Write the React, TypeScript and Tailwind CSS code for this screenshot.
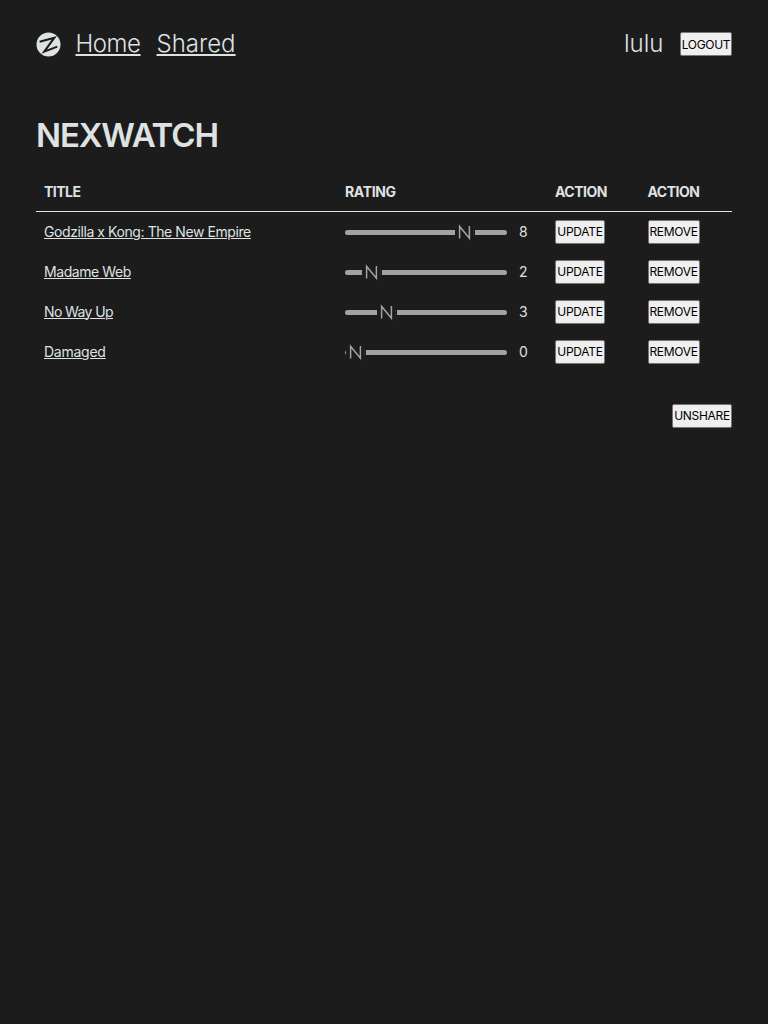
type Movie = { title: string; rating: number; offset: string; tracking: string };

const movies: Movie[] = [
  { title: 'Godzilla x Kong: The New Empire', rating: 8, offset: 'left-[110px]', tracking: 'tracking-[-0.42px]' },
  { title: 'Madame Web', rating: 2, offset: 'left-[17px]', tracking: 'tracking-[-0.42px]' },
  { title: 'No Way Up', rating: 3, offset: 'left-[32px]', tracking: 'tracking-[-0.6px]' },
  { title: 'Damaged', rating: 0, offset: 'left-px', tracking: 'tracking-[-0.25px]' },
];

const columns = 'grid grid-cols-[301px_174px_36px_92.5px_83.5px] items-center pl-2';

function Button({ label, className }: { label: string; className: string }) {
  return (
    <button
      className={`flex h-6 items-center justify-center rounded-[2px] border border-[#767676] bg-[#efefef] text-[12px] leading-none tracking-[-0.3px] whitespace-nowrap text-black ${className}`}
    >
      {label}
    </button>
  );
}

function Logo() {
  return (
    <svg viewBox="0 0 25 25" className="h-[25px] w-[25px]" fill="none">
      <circle cx="12.5" cy="12.5" r="12" fill="#dfe2e3" />
      <path
        d="M3.6 9.8 L18.4 5.7 L8.2 19.6 L21.3 14.6"
        stroke="#1c1c1c"
        strokeWidth="2"
        strokeLinejoin="miter"
      />
    </svg>
  );
}

function Slider({ offset }: { offset: string }) {
  return (
    <div className="relative h-[5px] w-[162px] rounded-full bg-[#a1a3a3]">
      <span
        className={`absolute -top-[9px] flex h-[22px] w-5 items-center justify-center bg-[#1c1c1c] ${offset}`}
      >
        <svg viewBox="0 0 20 22" className="h-[22px] w-5 shrink-0" fill="none">
          <path d="M4.6 17.5 V5.4 L14.4 17.2 V5" stroke="#a1a3a3" strokeWidth="1.5" />
          <path d="M18.5 9.5 V10.5 M18.5 12.5 V13.5" stroke="#4a4b4b" />
        </svg>
      </span>
    </div>
  );
}

export default function App() {
  return (
    <div className="min-h-screen bg-[#1c1c1c] px-9 pt-6 font-['Inter',sans-serif] text-[14px] text-[#dfe2e3]">
      <header className="flex h-10 items-center justify-between">
        <nav className="flex items-center text-[24px] font-[350]">
          <Logo />
          <a className="ml-[14.5px] w-[65px] tracking-[-0.45px] whitespace-nowrap underline decoration-2 underline-offset-[2px]">Home</a>
          <a className="ml-4 w-[79px] whitespace-nowrap underline decoration-2 underline-offset-[2px]">Shared</a>
        </nav>
        <div className="flex items-center gap-4">
          <span className="w-10 text-[24px] font-light">lulu</span>
          <Button label="LOGOUT" className="w-[52px] pt-px" />
        </div>
      </header>

      <h1 className="mt-[46px] text-[33px] leading-[50px] font-semibold tracking-[-1.15px]">NEXWATCH</h1>

      <section className="mt-3">
        <div className={`${columns} h-10 border-b border-[#dfe2e3] font-bold`}>
          <span className="tracking-[-0.5px]">TITLE</span>
          <span className="tracking-[-0.35px]">RATING</span>
          <span />
          <span className="tracking-[-0.5px]">ACTION</span>
          <span className="tracking-[-0.5px]">ACTION</span>
        </div>
        {movies.map((movie) => (
          <div key={movie.title} className={`${columns} h-10`}>
            <span className="pb-0.5">
              <a className={`underline decoration-1 underline-offset-[1px] ${movie.tracking}`}>{movie.title}</a>
            </span>
            <Slider offset={movie.offset} />
            <span className="pb-0.5">{movie.rating}</span>
            <Button label="UPDATE" className="w-[50px]" />
            <Button label="REMOVE" className="w-[52px]" />
          </div>
        ))}
      </section>

      <div className="mt-8 flex justify-end">
        <Button label="UNSHARE" className="w-[60px]" />
      </div>
    </div>
  );
}
